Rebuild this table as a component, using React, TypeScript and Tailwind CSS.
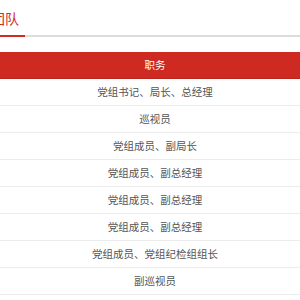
const duties = [
  "党组书记、局长、总经理",
  "巡视员",
  "党组成员、副局长",
  "党组成员、副总经理",
  "党组成员、副总经理",
  "党组成员、副总经理",
  "党组成员、党组纪检组组长",
  "副巡视员",
];

export default function App() {
  return (
    <div className="h-[300px] w-[300px] overflow-hidden bg-white font-['Noto_Sans_CJK_SC',sans-serif]">
      <div className="border-b-2 border-[#dddddd]">
        <div className="-ml-[9px] inline-block -mb-[2px] border-b-2 border-[#d22b24] pt-[10px] pb-[8px] pr-[6px] text-[14px] leading-[17px] text-[#d22b24]">
          团队
        </div>
      </div>
      <div className="mt-[15px]">
        <div className="flex h-[27px] items-center justify-center border-b border-[#b8231c] bg-[#cf2a21] pl-[10px] text-[10.5px] text-white">
          职务
        </div>
        {duties.map((d, i) => (
          <div
            key={i}
            className="flex h-[27px] items-center justify-center border-b border-[#ececec] pl-[10px] text-[10.5px] text-[#555555]"
          >
            {d}
          </div>
        ))}
      </div>
    </div>
  );
}
